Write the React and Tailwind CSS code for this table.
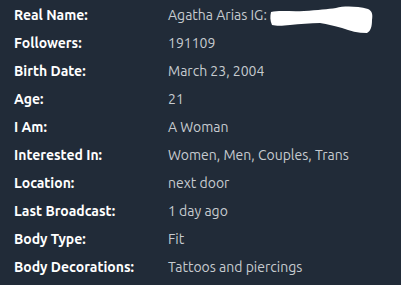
const ROWS = [
  ["Real Name:", "Agatha Arias IG:"],
  ["Followers:", "191109"],
  ["Birth Date:", "March 23, 2004"],
  ["Age:", "21"],
  ["I Am:", "A Woman"],
  ["Interested In:", "Women, Men, Couples, Trans"],
  ["Location:", "next door"],
  ["Last Broadcast:", "1 day ago"],
  ["Body Type:", "Fit"],
  ["Body Decorations:", "Tattoos and piercings"],
];

function Scribble() {
  // white marker blot hiding the handle
  return (
    <svg
      className="absolute left-[270px] top-[4px]"
      width="104"
      height="30"
      viewBox="0 0 104 30"
    >
      <path
        d="M1 8 C10 6 22 8 34 7 C48 6 58 5 66 4 C74 2 86 2 98 5 C102 7 103 10 102 16 C102 22 101 27 97 29 C88 29 80 27 72 24 C64 22 58 20 50 19 C40 19 30 20 20 21 C12 22 6 22 2 21 C0 17 0 12 1 8 Z"
        fill="#ffffff"
      />
    </svg>
  );
}

export default function App() {
  return (
    <div className="relative w-[401px] h-[285px] bg-[#212b38] pt-px font-['Ubuntu','Noto_Sans',sans-serif] text-[14px]">
      {ROWS.map(([label, value]) => (
        <div key={label} className="flex h-[28px] items-center">
          <div className="w-[168px] pl-[14px] font-bold text-white">{label}</div>
          <div className="text-[#c7cbd0]">{value}</div>
        </div>
      ))}
      <Scribble />
    </div>
  );
}
